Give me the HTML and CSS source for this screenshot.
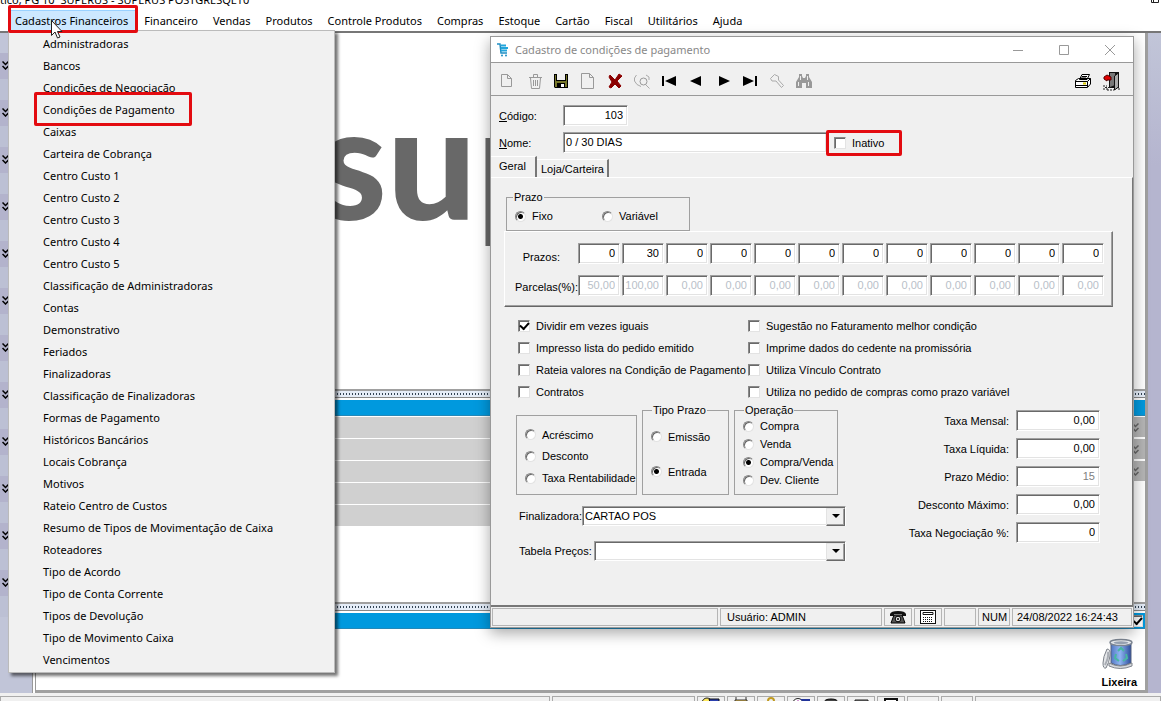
FILE: index.html
```html
<!DOCTYPE html>
<html lang="pt-BR">
<head>
<meta charset="utf-8">
<title>SUPERUS</title>
<link rel="stylesheet" href="styles.css">
</head>
<body>
<svg class="defs" width="0" height="0">
  <symbol id="chev" viewBox="0 0 7 9"><path d="M.5.5L3.500 3.500L6.500.5M.5 5L3.500 8L6.500 5" fill="none" stroke="currentColor" stroke-width="1.500"/></symbol>
</svg>
<div class="app">
  <header class="app-title"><span>tico, PG 10&nbsp; SUPERUS - SUPERUS POSTGRESQL10</span><svg class="restore" width="12" height="6" viewBox="0 0 12 6"><path d="M2.500 0V2.500H9.500V0M4.500 2.500V0" fill="none" stroke="#222"/></svg></header>
  <nav class="menubar">
    <button class="active marked">Cadastros Financeiros</button>
    <button>Financeiro</button><button>Vendas</button><button>Produtos</button><button>Controle Produtos</button><button>Compras</button><button>Estoque</button><button>Cartão</button><button>Fiscal</button><button>Utilitários</button><button>Ajuda</button>
  </nav>

  <div class="workspace">
    <aside class="rail">
      <i><svg><use href="#chev"/></svg></i><i><svg><use href="#chev"/></svg></i><i><svg><use href="#chev"/></svg></i><i><svg><use href="#chev"/></svg></i><i><svg><use href="#chev"/></svg></i><i><svg><use href="#chev"/></svg></i><i><svg><use href="#chev"/></svg></i><i><svg><use href="#chev"/></svg></i><i><svg><use href="#chev"/></svg></i><i><svg><use href="#chev"/></svg></i><i><svg><use href="#chev"/></svg></i><i><svg><use href="#chev"/></svg></i>
    </aside>
    <main class="desk">
      <section class="brand"><span>sup</span></section>
      <div class="splitter"></div>
      <section class="panel-list">
        <div class="bar"></div>
        <div class="rows">
          <div class="lines"><b></b><b></b><b></b><b></b><b></b></div>
          <div class="toggles"><b><svg><use href="#chev"/></svg></b><b><svg><use href="#chev"/></svg></b><b><svg><use href="#chev"/></svg></b></div>
        </div>
      </section>
      <div class="splitter"></div>
      <section class="panel-bin">
        <div class="bar"><input type="checkbox" class="check" checked aria-label="Mostrar"></div>
        <div class="bin">
          <svg width="32" height="32" viewBox="0 0 32 32">
            <defs><linearGradient id="g" x1="0" x2="1"><stop offset="0" stop-color="#5277c4"/><stop offset=".45" stop-color="#8fb6f2"/><stop offset="1" stop-color="#2c4d9c"/></linearGradient></defs>
            <path d="M9 5V25Q18 30 29 25V5Z" fill="url(#g)" stroke="#56637f"/>
            <path d="M7 25Q18 31 30 25V28Q18 33 7 28Z" fill="#d5d8dc" stroke="#81868e"/>
            <ellipse cx="19" cy="4.500" rx="11" ry="3" fill="#edf0f3" stroke="#7e8794" stroke-width="1.500"/>
            <ellipse cx="19" cy="4.800" rx="7.500" ry="1.500" fill="#9aa5b5"/>
            <path d="M16 13L19 10L22 13M14 16L13 20L17 23M24 16L25 20L21 23" fill="none" stroke="#48b7a2" stroke-width="2"/>
            <path d="M5 11Q9 11 8 18T4 30Q1 31 1 25T5 11Z" fill="#e4e6e9" stroke="#7d828a"/>
            <path d="M6 14Q7 19 3 27" fill="none" stroke="#a9adb4" stroke-width="2"/>
          </svg>
          <strong>Lixeira</strong>
        </div>
      </section>
    </main>
    <aside class="rail-right"></aside>
  </div>

  <footer class="app-status">
    <span class="w-first"></span><span class="w-second"></span>
    <span class="c"><svg width="20" height="12" viewBox="0 0 20 12"><circle cx="6" cy="6" r="5" fill="#ffe95a" stroke="#222"/><path d="M8 2H18V8H10Z" fill="#2b3fae" stroke="#111"/></svg></span>
    <span class="c"><svg width="20" height="12" viewBox="0 0 20 12"><path d="M5 0V4M15 0V4" stroke="#333"/><path d="M4 3H16V9H4Z" fill="#f4c64a" stroke="#333"/></svg></span>
    <span class="c"><svg width="20" height="12" viewBox="0 0 20 12"><circle cx="10" cy="4" r="3" fill="none" stroke="#c09a20" stroke-width="2"/><path d="M10 7L14 12" stroke="#222"/></svg></span>
    <span class="c"><svg width="20" height="12" viewBox="0 0 20 12"><circle cx="7" cy="7" r="5.500" fill="#fff" stroke="#222"/><path d="M7 3V8H10" stroke="#a3a" fill="none"/><path d="M9 2H19V6H13Z" fill="#22349a"/></svg></span>
    <span class="c"><svg width="20" height="12" viewBox="0 0 20 12"><path d="M3 6Q3 2 10 2T17 6V8H3Z" fill="#444" stroke="#000"/></svg></span>
    <span class="c"><svg width="20" height="12" viewBox="0 0 20 12"><path d="M4 3H17V9H4Z" fill="#777" stroke="#222"/></svg></span>
    <span class="c"><svg width="20" height="12" viewBox="0 0 20 12"><path d="M4 9V2H16V9" fill="#fff" stroke="#111" stroke-width="2"/></svg></span>
    <span class="e"></span><span class="e"></span><span class="rest"></span>
  </footer>

  <div class="dropdown" role="menu">
    <button>Administradoras</button><button>Bancos</button><button>Condições de Negociação</button><button class="marked">Condições de Pagamento</button><button>Caixas</button><button>Carteira de Cobrança</button><button>Centro Custo 1</button><button>Centro Custo 2</button><button>Centro Custo 3</button><button>Centro Custo 4</button><button>Centro Custo 5</button><button>Classificação de Administradoras</button><button>Contas</button><button>Demonstrativo</button><button>Feriados</button><button>Finalizadoras</button><button>Classificação de Finalizadoras</button><button>Formas de Pagamento</button><button>Históricos Bancários</button><button>Locais Cobrança</button><button>Motivos</button><button>Rateio Centro de Custos</button><button>Resumo de Tipos de Movimentação de Caixa</button><button>Roteadores</button><button>Tipo de Acordo</button><button>Tipo de Conta Corrente</button><button>Tipos de Devolução</button><button>Tipo de Movimento Caixa</button><button>Vencimentos</button>
  </div>
  <svg class="cursor" width="12" height="20" viewBox="0 0 12 20"><path d="M.5.5V15.500L4 12L6.500 18L9 17L6.500 11.500H11Z" fill="#fff" stroke="#222"/></svg>

  <section class="dialog">
    <header class="dlg-title">
      <svg width="12" height="14" viewBox="0 0 12 14"><path d="M0 1H3L4 10H10" fill="none" stroke="#1f8fc4" stroke-width="1.500"/><path d="M4 2.500H9M4 5H11M4 7.500H10" stroke="#22a5dc" stroke-width="2"/><circle cx="5" cy="12.500" r="1" fill="#1f8fc4"/><circle cx="9" cy="12.500" r="1" fill="#1f8fc4"/></svg>
      <h1>Cadastro de condições de pagamento</h1>
      <button aria-label="Minimizar"><svg width="12" height="12" viewBox="0 0 12 12"><path d="M1 6.500H11" stroke="#999"/></svg></button>
      <button aria-label="Maximizar"><svg width="12" height="12" viewBox="0 0 12 12"><path d="M1.500 1.500H10.500V10.500H1.500Z" fill="none" stroke="#999"/></svg></button>
      <button aria-label="Fechar"><svg width="12" height="12" viewBox="0 0 12 12"><path d="M1 1L11 11M11 1L1 11" stroke="#999"/></svg></button>
    </header>

    <div class="toolbar">
      <button aria-label="Novo"><svg width="18" height="18" viewBox="0 0 18 18"><path d="M3.500 2.500H9.500L13.500 6.500V14.500H3.500ZM9.500 2.500V6.500H13.500" fill="none" stroke="#999"/></svg></button>
      <button aria-label="Excluir"><svg width="18" height="18" viewBox="0 0 18 18"><path d="M4 5.500H17M8.500 5V2.500H12.500V5M5.500 6L6.500 16.500H14.500L15.500 6M8.500 8V14M10.500 8V14M12.500 8V14" fill="none" stroke="#999"/></svg></button>
      <button aria-label="Salvar"><svg width="18" height="18" viewBox="0 0 18 18"><path d="M2 2H16V16H3L2 15Z" fill="#000"/><path d="M5 2H13V8H5Z" fill="#f0f0f0"/><path d="M3 3H4V9H14V3H15V15H13V11H5V15H3Z" fill="#77772a"/><path d="M9 12H12V15H9Z" fill="#fff"/></svg></button>
      <button aria-label="Página"><svg width="18" height="18" viewBox="0 0 18 18"><path d="M2.500 1.500H10.500L14.500 5.500V16.500H2.500ZM10.500 1.500V5.500H14.500" fill="none" stroke="#999"/></svg></button>
      <button aria-label="Cancelar"><svg width="18" height="18" viewBox="0 0 18 18"><path d="M4 3L9 8L13 2L16 4L11 9L15 14L13 16L9 12L5 16L3 15L6 10L3 5Z" fill="#8b0000" stroke="#8b0000"/></svg></button>
      <button aria-label="Localizar"><svg width="18" height="18" viewBox="0 0 18 18"><path d="M3.500 3L1.500 6V9L4 12.500L8 14.500M13 3L16 5V8M12.500 12.500L16.500 16.500" fill="none" stroke="#aaa"/><circle cx="10.500" cy="9.500" r="3.500" fill="none" stroke="#999"/></svg></button>
      <button aria-label="Primeiro"><svg width="18" height="18" viewBox="0 0 18 18"><path d="M2 4H4V14H2ZM5 9L16 4V14Z"/></svg></button>
      <button aria-label="Anterior"><svg width="18" height="18" viewBox="0 0 18 18"><path d="M3 9L14 4V14Z"/></svg></button>
      <button aria-label="Próximo"><svg width="18" height="18" viewBox="0 0 18 18"><path d="M16 9L5 4V14Z"/></svg></button>
      <button aria-label="Último"><svg width="18" height="18" viewBox="0 0 18 18"><path d="M14 4H16V14H14ZM13 9L2 4V14Z"/></svg></button>
      <button aria-label="Filtrar"><svg width="18" height="18" viewBox="0 0 18 18"><path d="M6.500 2.500L2.500 6.500L4 9H8L13.500 15.500L15.500 13.500L10.500 8V4.500Z" fill="none" stroke="#aaa"/></svg></button>
      <button aria-label="Pesquisar"><svg width="18" height="18" viewBox="0 0 18 18"><path d="M4 2H7V4L8 6H10L11 4V2H14V5L17 10V16H11V11H7V16H1V10L4 5Z" fill="#999"/><path d="M3.500 10V14M13.500 10V14M5.500 4V8M12.500 4V8" stroke="#eee"/></svg></button>
      <span class="push"></span>
      <button aria-label="Imprimir"><svg width="18" height="18" viewBox="0 0 18 18"><path d="M5.500 7.500L8 2.500H15.500L13 7.500ZM1.500 8.500L4.500 6.500H16.500V12L13.500 15.500H1.500ZM1.500 9.500H13.500L16.500 6.500M13.500 9.500V15" fill="#fff" stroke="#000"/><path d="M8 4.500H13M7 6H12M2 13.500H13" stroke="#000"/><path d="M9 11.500H12" stroke="#d8c800" stroke-width="2"/></svg></button>
      <button aria-label="Sair"><svg width="20" height="20" viewBox="0 0 20 20"><path d="M7 1H17V17H7Z" fill="#111"/><path d="M8 2H13V14L8 16Z" fill="#777"/><path d="M12.500 5L16.500 2V16L12.500 19Z" fill="#aaa" stroke="#111"/><path d="M2 6L5 4L9 6V9H5V10L2 8Z" fill="#e00000" stroke="#500"/><path d="M1 15H5M3 16.500H9M1 18H6M5 19H12M16 18H19" stroke="#222" stroke-dasharray="2 1"/></svg></button>
    </div>

    <form class="form" onsubmit="return false">
      <div class="head">
        <label for="cod"><u>C</u>ódigo:</label><input id="cod" class="field num short" value="103">
        <label for="nome"><u>N</u>ome:</label>
        <div class="name-line"><input id="nome" class="field" value="0 / 30 DIAS"><label class="opt inactive marked"><input type="checkbox" class="check">Inativo</label></div>
      </div>

      <div class="tabs" role="tablist"><button type="button" role="tab" class="on">Geral</button><button type="button" role="tab">Loja/Carteira</button></div>

      <div class="sheet">
        <fieldset class="group term"><legend>Prazo</legend>
          <label class="opt"><input type="radio" class="radio" name="prazo" checked>Fixo</label>
          <label class="opt"><input type="radio" class="radio" name="prazo">Variável</label>
        </fieldset>

        <div class="raised">
          <span>Prazos:</span>
          <div class="cells"><input class="field num" aria-label="Prazo 1" value="0"><input class="field num" aria-label="Prazo 2" value="30"><input class="field num" aria-label="Prazo 3" value="0"><input class="field num" aria-label="Prazo 4" value="0"><input class="field num" aria-label="Prazo 5" value="0"><input class="field num" aria-label="Prazo 6" value="0"><input class="field num" aria-label="Prazo 7" value="0"><input class="field num" aria-label="Prazo 8" value="0"><input class="field num" aria-label="Prazo 9" value="0"><input class="field num" aria-label="Prazo 10" value="0"><input class="field num" aria-label="Prazo 11" value="0"><input class="field num" aria-label="Prazo 12" value="0"></div>
          <span>Parcelas(%):</span>
          <div class="cells"><input disabled class="field num" aria-label="Parcela 1" value="50,00"><input disabled class="field num" aria-label="Parcela 2" value="100,00"><input disabled class="field num" aria-label="Parcela 3" value="0,00"><input disabled class="field num" aria-label="Parcela 4" value="0,00"><input disabled class="field num" aria-label="Parcela 5" value="0,00"><input disabled class="field num" aria-label="Parcela 6" value="0,00"><input disabled class="field num" aria-label="Parcela 7" value="0,00"><input disabled class="field num" aria-label="Parcela 8" value="0,00"><input disabled class="field num" aria-label="Parcela 9" value="0,00"><input disabled class="field num" aria-label="Parcela 10" value="0,00"><input disabled class="field num" aria-label="Parcela 11" value="0,00"><input disabled class="field num" aria-label="Parcela 12" value="0,00"></div>
        </div>

        <div class="checks">
          <label class="opt"><input type="checkbox" class="check" checked>Dividir em vezes iguais</label>
          <label class="opt"><input type="checkbox" class="check">Sugestão no Faturamento melhor condição</label>
          <label class="opt"><input type="checkbox" class="check">Impresso lista do pedido emitido</label>
          <label class="opt"><input type="checkbox" class="check">Imprime dados do cedente na promissória</label>
          <label class="opt"><input type="checkbox" class="check">Rateia valores na Condição de Pagamento</label>
          <label class="opt"><input type="checkbox" class="check">Utiliza Vínculo Contrato</label>
          <label class="opt"><input type="checkbox" class="check">Contratos</label>
          <label class="opt"><input type="checkbox" class="check">Utiliza no pedido de compras como prazo variável</label>
        </div>

        <div class="lower">
          <div class="lower-left">
            <div class="groups">
              <fieldset class="group g1" aria-label="Tipo de ajuste">
                <label class="opt"><input type="radio" class="radio" name="aj">Acréscimo</label>
                <label class="opt"><input type="radio" class="radio" name="aj">Desconto</label>
                <label class="opt"><input type="radio" class="radio" name="aj">Taxa Rentabilidade</label>
              </fieldset>
              <fieldset class="group g2"><legend>Tipo Prazo</legend>
                <label class="opt"><input type="radio" class="radio" name="tp">Emissão</label>
                <label class="opt"><input type="radio" class="radio" name="tp" checked>Entrada</label>
              </fieldset>
              <fieldset class="group g3"><legend>Operação</legend>
                <label class="opt"><input type="radio" class="radio" name="op">Compra</label>
                <label class="opt"><input type="radio" class="radio" name="op">Venda</label>
                <label class="opt"><input type="radio" class="radio" name="op" checked>Compra/Venda</label>
                <label class="opt"><input type="radio" class="radio" name="op">Dev. Cliente</label>
              </fieldset>
            </div>
            <div class="combo"><label for="fin">Finalizadora:</label><div class="select"><select id="fin"><option>CARTAO POS</option></select></div></div>
            <div class="combo"><label for="tab">Tabela Preços:</label><div class="select"><select id="tab"><option></option></select></div></div>
          </div>
          <div class="rates">
            <label for="r1">Taxa Mensal:</label><input id="r1" class="field num" value="0,00">
            <label for="r2">Taxa Líquida:</label><input id="r2" class="field num" value="0,00">
            <label for="r3">Prazo Médio:</label><input id="r3" class="field num dim" value="15" readonly>
            <label for="r4">Desconto Máximo:</label><input id="r4" class="field num" value="0,00">
            <label for="r5">Taxa Negociação %:</label><input id="r5" class="field num" value="0">
          </div>
        </div>
      </div>
    </form>

    <footer class="dlg-status">
      <span class="s-a"></span><span class="s-b">Usuário: ADMIN</span>
      <span class="s-i"><svg width="18" height="16" viewBox="0 0 18 16"><path d="M1 5Q2 2 9 2T17 5V7H13V5H5V7H1Z" fill="#111"/><path d="M5 6H13L16 14H2Z" fill="#555" stroke="#000"/><circle cx="9" cy="10" r="2.800" fill="#ddd" stroke="#000"/><circle cx="9" cy="10" r="1"/></svg></span>
      <span class="s-i"><svg width="16" height="14" viewBox="0 0 16 14"><rect x=".5" y=".5" width="15" height="13" fill="#fff" stroke="#111"/><path d="M3 2.500H13V4.500H3Z" fill="none" stroke="#111"/><path d="M3 7.500H13M3 9.500H13M3 11.500H13" stroke="#111" stroke-dasharray="1 1"/></svg></span>
      <span class="s-c"></span><span class="s-c">NUM</span><span class="s-d">24/08/2022 16:24:43</span>
    </footer>
  </section>
</div>
</body>
</html>
```
FILE: styles.css
```css
* { box-sizing: border-box; }
body { margin: 0; background: #fff; color: #000; }
button, input, select { font: inherit; color: inherit; margin: 0; }
button { border: 0; padding: 0; background: none; text-align: left; white-space: nowrap; }
.defs { position: absolute; }

.app {
  position: relative;
  display: flex;
  flex-direction: column;
  height: 100vh;
  overflow: hidden;
  font: 11px/16px "Noto Sans", "Open Sans", sans-serif;
}
.app-title { display: flex; justify-content: space-between; height: 10px; overflow: hidden; }
.app-title span { margin-top: -8px; white-space: nowrap; }

.menubar { position: relative; z-index: 3; display: flex; gap: 1px; height: 21px; padding-left: 8px; }
.menubar button { position: relative; padding: 0 7px; }
.menubar .active { padding-right: 8px; background: #cce8ff; border-top: 1px solid #99d1ff; }
.marked::after {
  content: "";
  position: absolute;
  inset: -6px 0 -2px;
  border: 3px solid #e30b10;
  border-radius: 2px;
  pointer-events: none;
}
.menubar .marked::after { right: -2px; z-index: 5; }

/* Background workspace */
.workspace { display: flex; flex: 1; min-height: 0; border-top: 2px solid #777; }
.rail { width: 33px; padding-top: 20px; background: #c1c5d8; overflow: hidden; border-right: 1px solid #999; }
.rail i { display: block; height: 47px; padding: 8px 0 0 2px; background: linear-gradient(#b3b3cc 26px, #bcc0d4 26px); }
.rail svg, .toggles svg { display: block; width: 7px; height: 9px; }
.desk { flex: 1; display: flex; flex-direction: column; min-width: 0; margin-left: 2px; border-left: 1px solid #999; border-right: 3px solid #a0a0a0; border-bottom: 3px solid #a0a0a0; }
.brand { flex: 1; overflow: hidden; padding: 31px 0 0 281px; font: 900 158px/190px Lato, sans-serif; color: #686868; }
.splitter { height: 9px; border-top: 2px solid #a0a0a0; border-bottom: 1px solid #888; background: radial-gradient(circle, #345 40%, transparent 50%) 0 2px / 3px 2px repeat-x #e5edf8; }
.bar { height: 18px; border-top: 2px solid #fff; border-bottom: 1px solid #2488b8; background: #0099de; }
.panel-list { height: 204px; }
.rows { display: flex; gap: 10px; padding-top: 1px; }
.lines { flex: 1; }
.lines b { display: block; height: 22px; border-bottom: 1px solid #fff; background: #d0d0d0; }
.toggles { width: 20px; color: #666; }
.toggles b { display: flex; align-items: center; justify-content: flex-end; height: 22px; border-bottom: 2px solid #fff; background: #b5b5b5; padding-right: 6px; }
.panel-bin { height: 79px; }
.panel-bin .bar { display: flex; justify-content: flex-end; align-items: center; padding-right: 2px; }
.bin { display: flex; flex-direction: column; align-items: flex-end; gap: 4px; padding: 9px 8px 0 0; font: 11px/16px "Liberation Sans", Arial, sans-serif; }
.bin svg { margin-right: 3px; }
.rail-right { width: 13px; background: linear-gradient(#c1c5d8, #b5b5cf 20%); }
.app-status { display: flex; gap: 2px; height: 8px; padding-top: 3px; background: #f0f0f0; overflow: hidden; }
.app-status span { flex: none; height: 20px; border: 1px solid #aaa; text-align: center; line-height: 0; }
.app-status .w-first { width: 550px; }
.app-status .w-second { width: 143px; }
.app-status .c { width: 28px; }
.app-status .e { width: 32px; }
.app-status .rest { flex: 1; }

/* Open menu */
.dropdown {
  position: absolute;
  left: 8px;
  top: 30px;
  width: 327px;
  padding: 2px 0 1px;
  display: flex;
  flex-direction: column;
  background: #f1f1f1;
  border: 1px solid #bbb;
  box-shadow: 3px 3px 3px rgba(0, 0, 0, .55);
  z-index: 2;
}
.dropdown button { position: relative; height: 22px; padding-left: 34px; }
.dropdown .marked::after { inset: -7px 142px -5px 25px; z-index: 1; }
.cursor { position: absolute; left: 51px; top: 20px; z-index: 4; }

/* Dialog window */
.dialog {
  position: absolute;
  left: 490px;
  top: 36px;
  width: 644px;
  display: flex;
  flex-direction: column;
  background: #f0f0f0;
  border: 1px solid #999;
  box-shadow: 0 5px 14px rgba(0, 0, 0, .35);
  font: 11px/14px "Liberation Sans", Arial, sans-serif;
}
.dlg-title { display: flex; align-items: center; height: 26px; padding-left: 6px; background: #fff; border-bottom: 1px solid #999; color: #888; font: 11px/16px "Noto Sans", "Open Sans", sans-serif; }
.dlg-title h1 { flex: 1; margin: 0 0 0 6px; font: inherit; }
.dlg-title button { display: grid; place-items: center; width: 46px; height: 24px; }
.toolbar { display: flex; align-items: center; height: 33px; padding: 3px 8px 0 2px; border-bottom: 1px solid #999; }
.toolbar button { display: grid; place-items: center; width: 27px; height: 26px; }
.toolbar button:last-child { margin-left: 2px; }
.toolbar svg { display: block; }
.push { flex: 1; }

.field {
  width: 100%;
  height: 21px;
  padding: 0 4px 2px 2px;
  background: #fff;
  border: 1px solid;
  border-color: #a0a0a0 #fff #fff #a0a0a0;
  border-radius: 0;
  box-shadow: inset 1px 1px #696969, inset -1px -1px #e3e3e3;
  outline: 0;
}
.num { text-align: right; }
.short { width: 65px; }
.dim { color: #808080; }
.field:disabled { color: #b8c0c8; }
.opt { display: flex; align-items: center; gap: 6px; white-space: nowrap; }
.check, .radio { appearance: none; flex: none; width: 12px; height: 12px; background: #fff; border: 1px solid; border-color: #888 #e3e3e3 #e3e3e3 #888; box-shadow: inset 1px 1px #696969; }
.check:checked { display: grid; place-items: center; }
.check:checked::before { content: ""; width: 7px; height: 4px; margin-top: -2px; border: solid #000; border-width: 0 0 2px 2px; transform: rotate(-48deg); }
.radio { width: 11px; height: 11px; border-radius: 50%; }
.radio:checked { background: radial-gradient(circle, #000 2px, #fff 3px); }

.head { display: grid; grid-template-columns: 64px 1fr; align-items: center; row-gap: 6px; padding: 9px 0 0 8px; }
.name-line { display: flex; align-items: center; }
.name-line .field { width: 264px; }
.inactive { position: relative; padding-left: 7px; width: 75px; }
.inactive::after { inset: -6px 0 -6px -1px; }

.tabs { display: flex; align-items: flex-end; margin-top: 3px; }
.tabs button { height: 18px; padding: 0 3px 0 4px; border-right: 2px solid #777; border-top: 1px solid #fff; }
.tabs .on { height: 21px; width: 46px; padding: 0 0 2px 8px; }
.sheet { padding: 12px 19px 44px 15px; border-top: 1px solid #fff; border-right: 1px solid #777; }
.group { min-width: 0; margin: 0; padding: 0; border: 1px solid #a0a0a0; }
.group legend { padding: 0 1px; line-height: 14px; }
.term { display: flex; width: 184px; height: 41px; padding-left: 8px; }
.term legend { margin-left: -2px; }
.term .opt { width: 87px; height: 24px; }
.raised { display: grid; grid-template-columns: 71px 1fr; row-gap: 11px; align-items: center; margin-left: -2px; padding: 11px 8px 10px 2px; border: 1px solid; border-color: #fff #777 #666 #fff; box-shadow: inset -1px -1px #a0a0a0; }
.raised > span { text-align: right; white-space: nowrap; padding-top: 2px; }
.raised > span:first-child { padding: 6px 18px 0 0; }
.cells { display: grid; grid-template-columns: repeat(12, 1fr); gap: 2px; }
.checks { display: grid; grid-template-columns: 230px 1fr; grid-auto-rows: 22px; margin: 8px 0 0 12px; }
.lower { display: flex; justify-content: space-between; margin: 0 13px 0 10px; }
.lower-left { width: 330px; }
.groups { display: flex; align-items: flex-end; gap: 5px; margin-bottom: 11px; }
.g1 { display: grid; width: 121px; height: 80px; padding: 8px 0 5px 8px; }
.g2 { width: 87px; height: 92px; padding: 2px 0 0 8px; }
.g2 legend { margin-left: 1px; }
.g2 .opt { height: 35px; }
.g3 { width: 104px; height: 92px; padding-left: 8px; }
.g3 legend { margin-left: 1px; }
.g3 .opt { height: 18px; }
.combo { display: flex; align-items: center; margin: 0 0 15px 3px; white-space: nowrap; }
.combo:last-child { margin-bottom: 0; }
.combo:last-child label { padding-right: 2px; }
.select { position: relative; flex: 1; display: flex; }
.select select { appearance: none; width: 100%; height: 20px; padding: 0 20px 0 2px; background: #fff; border: 1px solid; border-color: #a0a0a0 #fff #fff #a0a0a0; border-radius: 0; box-shadow: inset 1px 1px #696969, inset -1px -1px #e3e3e3; outline: 0; }
.select::before { content: ""; position: absolute; right: 1px; top: 2px; width: 17px; height: 16px; background: #f0f0f0; border: 1px solid; border-color: #e3e3e3 #696969 #696969 #e3e3e3; box-shadow: inset -1px -1px #a0a0a0; pointer-events: none; }
.select::after { content: ""; position: absolute; right: 6px; top: 8px; border: 4px solid transparent; border-top-color: #000; border-bottom: 0; pointer-events: none; }
.rates { display: grid; grid-template-columns: 1fr 84px; grid-auto-rows: 21px; gap: 7px; align-content: start; padding-top: 7px; align-items: center; text-align: right; }

.dlg-status { display: flex; gap: 2px; height: 22px; padding: 1px; border-top: 2px solid #777; }
.dlg-status span { height: 18px; line-height: 16px; border: 1px solid #b5b5b5; white-space: nowrap; }
.s-a { width: 226px; }
.s-b { flex: 1; padding-left: 6px; }
.s-i { width: 28px; display: grid; place-items: center; }
.s-c { width: 32px; padding-left: 3px; }
.s-d { width: 120px; padding-left: 4px; }
```
